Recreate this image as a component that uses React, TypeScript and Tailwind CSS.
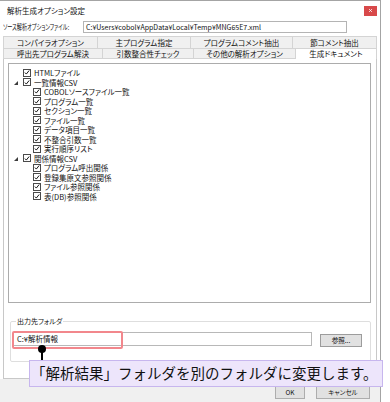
import React from 'react';

type Node = { label: string; level: 1 | 2; expander?: boolean };

const TREE: Node[] = [
  { label: 'HTMLファイル', level: 1 },
  { label: '一覧情報CSV', level: 1, expander: true },
  { label: 'COBOLソースファイル一覧', level: 2 },
  { label: 'プログラム一覧', level: 2 },
  { label: 'セクション一覧', level: 2 },
  { label: 'ファイル一覧', level: 2 },
  { label: 'データ項目一覧', level: 2 },
  { label: '不整合引数一覧', level: 2 },
  { label: '実行順序リスト', level: 2 },
  { label: '関係情報CSV', level: 1, expander: true },
  { label: 'プログラム呼出関係', level: 2 },
  { label: '登録集原文参照関係', level: 2 },
  { label: 'ファイル参照関係', level: 2 },
  { label: '表(DB)参照関係', level: 2 },
];

const TABS_TOP = [
  { label: 'コンパイラオプション', w: 'w-[94px]' },
  { label: '主プログラム指定', w: 'w-[93px]' },
  { label: 'プログラムコメント抽出', w: 'w-[102px]' },
  { label: '節コメント抽出', w: 'w-[85px]' },
];

const TABS_BOTTOM = [
  { label: '呼出先プログラム解決', w: 'w-[99px]' },
  { label: '引数整合性チェック', w: 'w-[91px]' },
  { label: 'その他の解析オプション', w: 'w-[102px]' },
  { label: '生成ドキュメント', w: 'w-[82px]', active: true },
];

const CheckBox = () => (
  <span className="w-[8px] h-[8px] border border-[#4a4a4a] bg-white flex items-center justify-center shrink-0">
    <svg viewBox="0 0 8 8" className="w-[7px] h-[7px]">
      <path d="M1.2 4.1 L3.1 6.1 L6.9 1.3" stroke="#111" strokeWidth="1.3" fill="none" />
    </svg>
  </span>
);

const TreeRow: React.FC<{ node: Node }> = ({ node }) => (
  <div className={`h-[9.5px] flex items-center ${node.level === 1 ? 'pl-[5px]' : 'pl-[15px]'}`}>
    <span className="w-[9px] h-full flex items-center shrink-0">
      {node.expander && (
        <svg viewBox="0 0 4 4" className="w-[4px] h-[4px] mt-[1px]">
          <polygon points="4,0 4,4 0,4" fill="#3c3c3c" />
        </svg>
      )}
    </span>
    <CheckBox />
    <span className="ml-[3px] text-[7.5px] leading-none whitespace-nowrap">{node.label}</span>
  </div>
);

export default function App() {
  return (
    <div className="relative w-[390px] h-[402px] overflow-hidden bg-white text-[#111] font-['Noto_Sans_CJK_JP',sans-serif] [font-feature-settings:'palt']">
      <div className="flex flex-col w-[381px] h-full border-t border-r border-[#a4a4a4]">
        {/* title bar */}
        <div className="h-[19px] flex items-center justify-between pl-[7px] pr-[3px] shrink-0">
          <span className="text-[7.5px] leading-none">解析生成オプション設定</span>
          <div className="w-[13px] h-[10px] bg-[#d8494a] flex items-center justify-center">
            <svg viewBox="0 0 4 4" className="w-[3px] h-[3px]">
              <path d="M0 0 L4 4 M4 0 L0 4" stroke="#fff" strokeWidth="1" />
            </svg>
          </div>
        </div>

        {/* source option file */}
        <div className="h-[12px] mt-[1px] flex items-center pl-[3px] shrink-0">
          <span className="w-[80px] shrink-0 flex items-center">
            <span className="inline-block origin-left scale-x-[0.69] text-[7.5px] leading-none whitespace-nowrap">
              ソース解析オプションファイル:
            </span>
          </span>
          <div className="w-[264px] h-[12px] border border-[#b4b4b4] px-[2px] flex items-center text-[7px] leading-none whitespace-nowrap overflow-hidden">
            C:¥Users¥cobol¥AppData¥Local¥Temp¥MNG65E7.xml
          </div>
        </div>

        {/* tabs */}
        <div className="ml-[3px] mt-[3px] w-[374px] flex flex-col shrink-0">
          <div className="h-[12px] flex">
            {TABS_TOP.map((t, i) => (
              <div
                key={t.label}
                className={`${t.w} h-full border-t border-l ${i === TABS_TOP.length - 1 ? 'border-r' : ''} border-[#d4d4d4] bg-[#f0f0f0] flex items-center justify-center text-[7.5px] leading-none whitespace-nowrap`}
              >
                {t.label}
              </div>
            ))}
          </div>
          <div className="h-[11px] flex">
            {TABS_BOTTOM.map((t, i) => (
              <div
                key={t.label}
                className={`${t.w} h-full border-t border-l ${i === TABS_BOTTOM.length - 1 ? 'border-r' : ''} ${t.active ? 'bg-white' : 'bg-[#f0f0f0] border-b'} border-[#d4d4d4] flex items-center justify-center text-[7.5px] leading-none whitespace-nowrap`}
              >
                {t.label}
              </div>
            ))}
          </div>

          {/* tab page */}
          <div className="h-[320px] border-l border-r border-b border-[#c8c8c8] bg-white flex flex-col">
            <div className="mt-[4px] ml-[4px] w-[363px] h-[240px] border border-[#acacac] pt-[4px] shrink-0">
              {TREE.map(n => (
                <TreeRow key={n.label} node={n} />
              ))}
            </div>

            <fieldset className="mt-[14px] ml-[6px] w-[361px] h-[45px] border border-[#dedede] rounded-[2px] px-[2px]">
              <legend className="ml-[3px] px-[1px] text-[7px] leading-[9px]">出力先フォルダ</legend>
              <div className="flex items-start mt-[6px]">
                <div className="w-[299px] h-[14px] border border-[#b8b8b8] flex items-center px-[3px] text-[7.5px] leading-none">
                  C:¥解析情報
                </div>
                <div className="ml-[8px] mt-[2px] w-[42px] h-[13px] border border-[#9c9c9c] bg-[#e1e1e1] flex items-center justify-center text-[6.5px] leading-none">
                  参照...
                </div>
              </div>
            </fieldset>
          </div>
        </div>

        {/* bottom bar */}
        <div className="flex-1 bg-[#f0f0f0] flex justify-end items-start gap-[11px] pr-[10px] pt-[6px]">
          <div className="w-[30px] h-[14px] border border-[#adadad] bg-[#e1e1e1] flex items-center justify-center text-[6.5px] leading-none">
            OK
          </div>
          <div className="w-[54px] h-[14px] border border-[#adadad] bg-[#e1e1e1] flex items-center justify-center text-[6.5px] leading-none">
            キャンセル
          </div>
        </div>
      </div>

      {/* annotation overlay */}
      <div className="absolute left-[12px] top-[331px] w-[111px] h-[18px] border-[2.5px] border-[#f2878c] rounded-[2px]" />
      <div className="absolute left-[41px] top-[348px] w-[1.5px] h-[12px] bg-black" />
      <div className="absolute left-[38px] top-[344.5px] w-[8px] h-[8px] rounded-full bg-black" />
      <div className="absolute left-[29px] top-[360px] w-[354px] h-[27px] bg-[#ede5fb] border border-[#c7b6ee] flex items-center pl-[1px] text-[14.5px] leading-none whitespace-nowrap [font-feature-settings:normal]">
        「解析結果」フォルダを別のフォルダに変更します。
      </div>
    </div>
  );
}
